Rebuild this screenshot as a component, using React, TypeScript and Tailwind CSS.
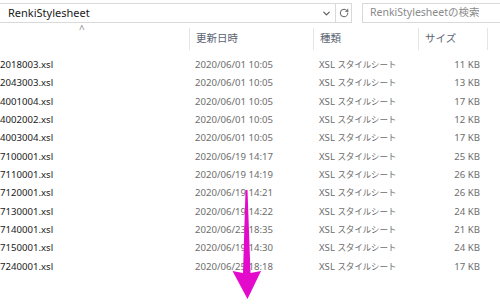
import { ChevronDown, RotateCw } from 'lucide-react'

const rows = [
  { name: '2018003.xsl', date: '2020/06/01 10:05', size: '11 KB' },
  { name: '2043003.xsl', date: '2020/06/01 10:05', size: '13 KB' },
  { name: '4001004.xsl', date: '2020/06/01 10:05', size: '17 KB' },
  { name: '4002002.xsl', date: '2020/06/01 10:05', size: '12 KB' },
  { name: '4003004.xsl', date: '2020/06/01 10:05', size: '17 KB' },
  { name: '7100001.xsl', date: '2020/06/19 14:17', size: '25 KB' },
  { name: '7110001.xsl', date: '2020/06/19 14:19', size: '26 KB' },
  { name: '7120001.xsl', date: '2020/06/19 14:21', size: '26 KB' },
  { name: '7130001.xsl', date: '2020/06/19 14:22', size: '24 KB' },
  { name: '7140001.xsl', date: '2020/06/23 18:35', size: '21 KB' },
  { name: '7150001.xsl', date: '2020/06/19 14:30', size: '24 KB' },
  { name: '7240001.xsl', date: '2020/06/25 18:18', size: '17 KB' },
]

export default function App() {
  return (
    <div
      className="relative w-[500px] h-[308px] overflow-hidden bg-white text-[9.6px]"
      style={{ fontFamily: '"Noto Sans", "Noto Sans CJK JP", sans-serif' }}
    >
      {/* address + search bar */}
      <div className="flex items-stretch h-[20px] mt-[3px]">
        <div className="flex items-center w-[336px] border border-l-0 border-[#d9d9d9] pl-[8px] pr-[3px]">
          <span className="flex-1 text-[#1a1a1a] text-[11px]">RenkiStylesheet</span>
          <ChevronDown className="w-[11px] h-[11px] text-[#555]" strokeWidth={2.5} />
        </div>
        <div className="flex items-center justify-center w-[16px] border border-l-0 border-[#d9d9d9]">
          <RotateCw className="w-[10px] h-[10px] text-[#555]" strokeWidth={2.2} />
        </div>
        <div className="flex items-center flex-1 ml-[10px] border border-r-0 border-[#d9d9d9] pl-[7px]">
          <span className="text-[#8a8a8a] text-[10.5px]">RenkiStylesheetの検索</span>
        </div>
      </div>

      {/* column headers */}
      <div className="relative flex h-[27px] items-end text-[#5b6472] text-[10.5px]">
        <span className="absolute left-[79px] top-[1px] text-[#8a8a8a] text-[10px] leading-none">^</span>
        <div className="w-[189px]" />
        <div className="flex items-center w-[124px] h-[22px] border-l border-[#e5e5e5] pl-[6px]">更新日時</div>
        <div className="flex items-center w-[105px] h-[22px] border-l border-[#e5e5e5] pl-[6px]">種類</div>
        <div className="flex items-center w-[69px] h-[22px] border-l border-[#e5e5e5] pl-[6px]">サイズ</div>
        <div className="h-[22px] border-l border-[#e5e5e5]" />
      </div>

      {/* file rows */}
      <div className="mt-[6px]">
        {rows.map((r) => (
          <div key={r.name} className="flex items-center h-[18.33px]">
            <div className="w-[189px] text-[#1a1a1a]">{r.name}</div>
            <div className="w-[124px] pl-[6px] text-[#6d6d6d]">{r.date}</div>
            <div className="w-[105px] pl-[6px] text-[#6d6d6d]">
              XSL <span className="text-[8.6px] tracking-[-0.2px]">スタイルシート</span>
            </div>
            <div className="w-[69px] pr-[7px] text-right text-[#6d6d6d]">{r.size}</div>
          </div>
        ))}
      </div>

      {/* magenta arrow overlay */}
      <svg className="absolute left-0 top-0" width="500" height="308" viewBox="0 0 500 308">
        <polygon
          points="245.5,190 247.5,190 250.5,273 261,271 247.5,299 232.5,271 243,273"
          fill="#e40acb"
        />
      </svg>
    </div>
  )
}
